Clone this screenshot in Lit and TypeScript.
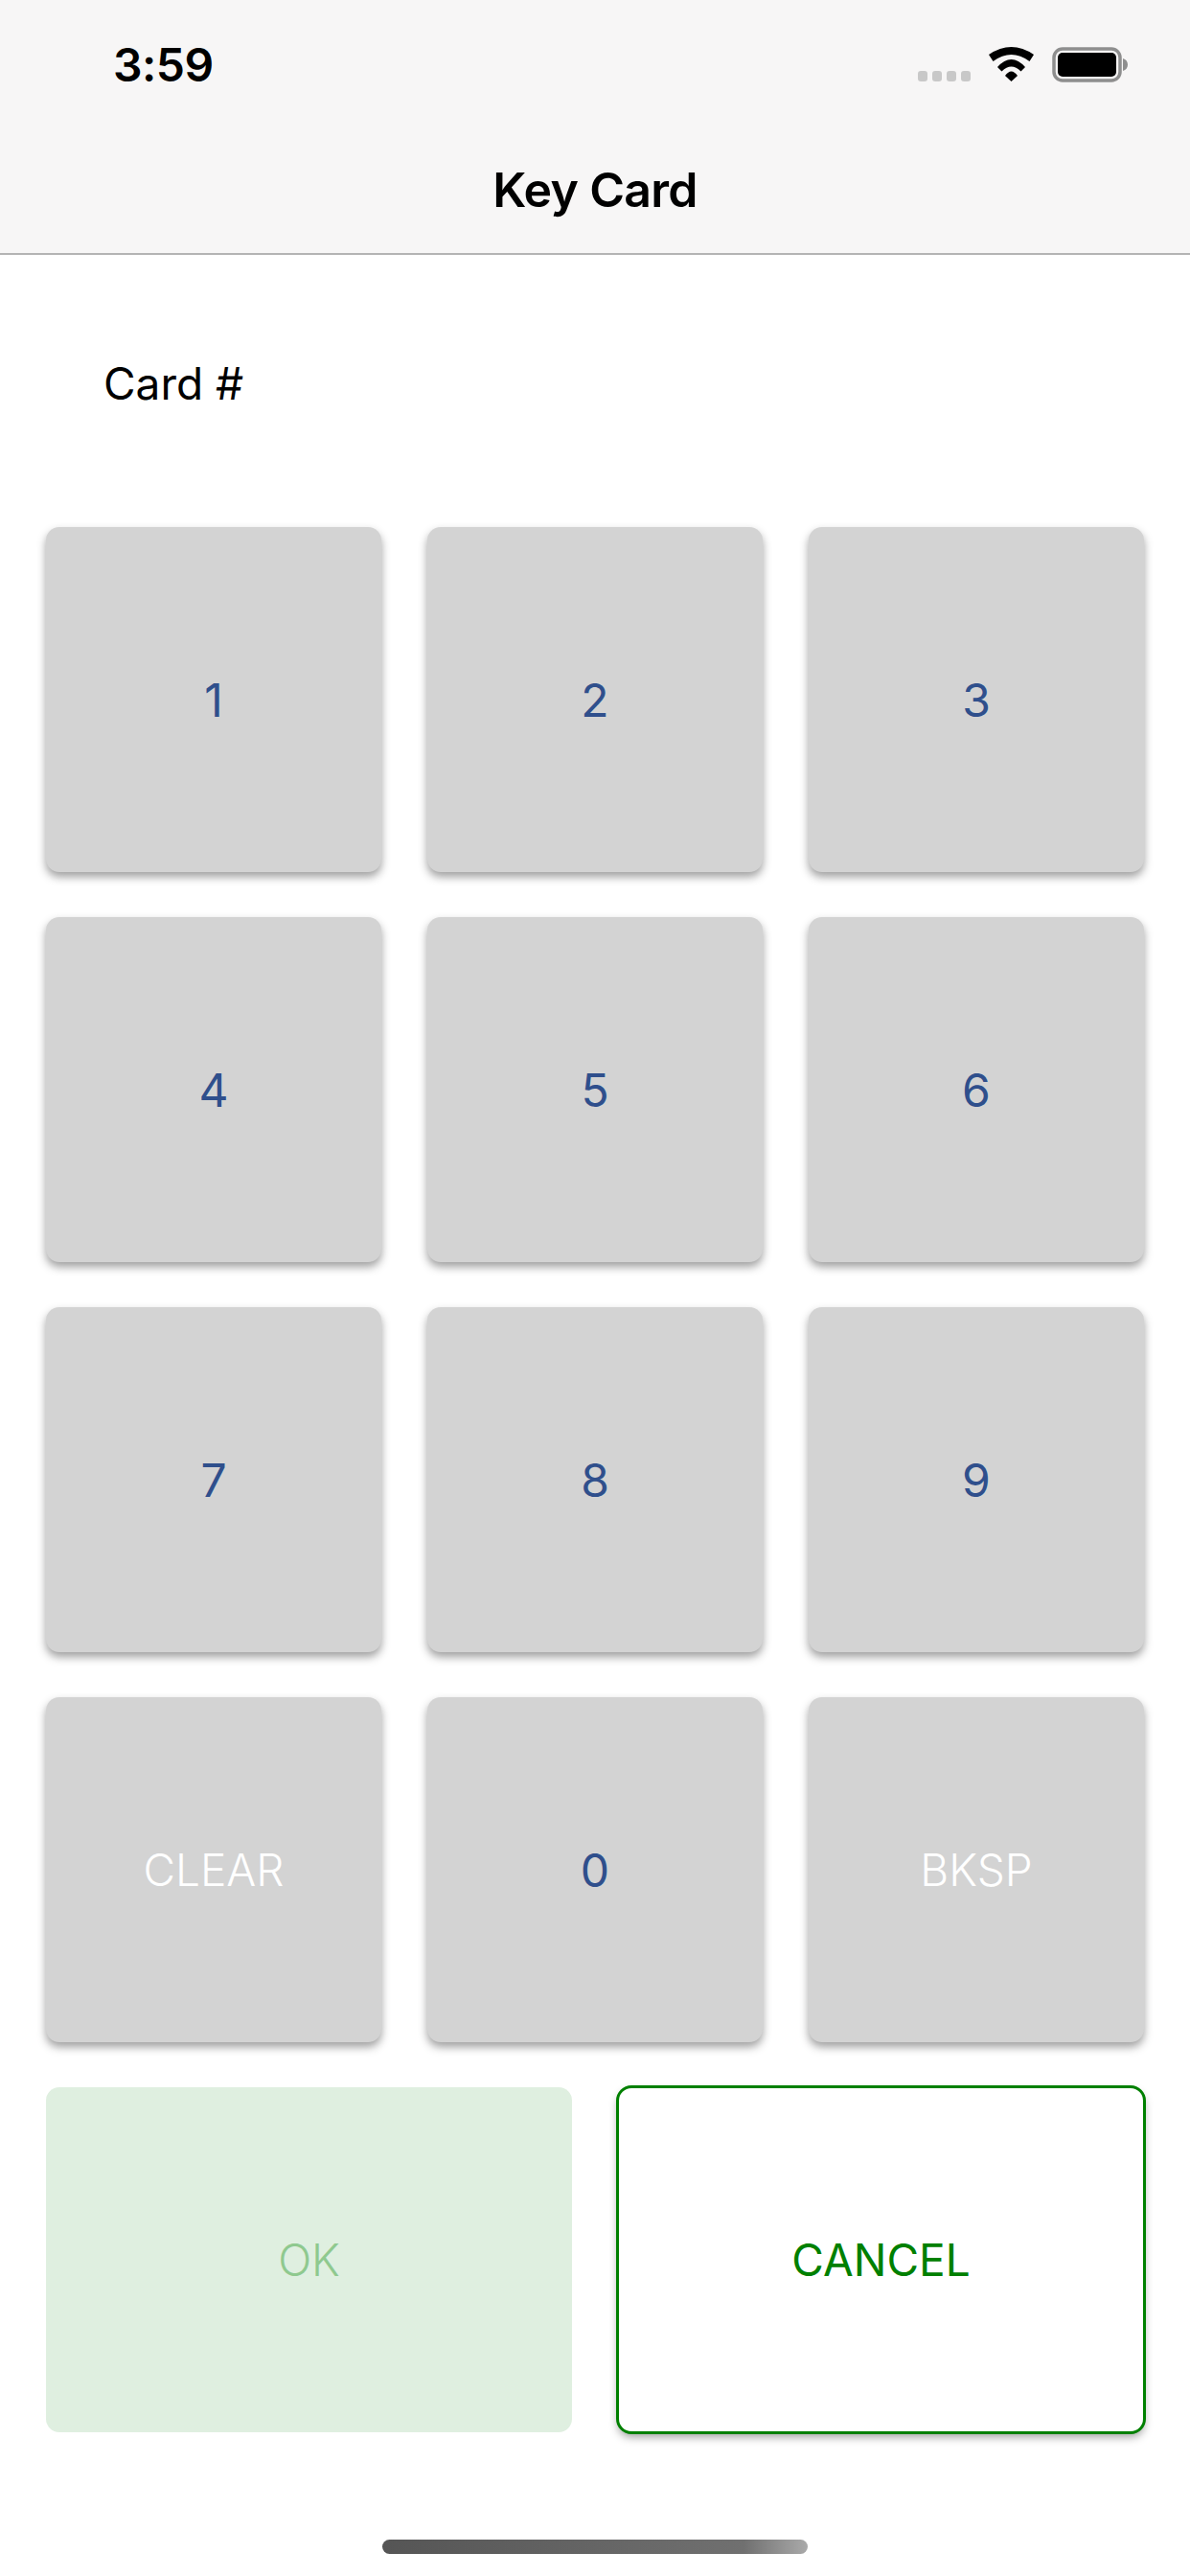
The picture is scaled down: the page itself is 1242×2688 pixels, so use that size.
import { LitElement, html, css } from "lit";
import { customElement } from "lit/decorators.js";

const KEYS = ["1", "2", "3", "4", "5", "6", "7", "8", "9", "CLEAR", "0", "BKSP"];

@customElement("app-root")
export class AppRoot extends LitElement {
  static styles = css`
    :host {
      display: block;
      width: 1242px;
      height: 2688px;
      background: #ffffff;
      font-family: "Inter", "Liberation Sans", sans-serif;
      position: relative;
      overflow: hidden;
    }

    .top {
      height: 264px;
      background: #f7f6f6;
      border-bottom: 2px solid #b4b4b4;
      display: flex;
      flex-direction: column;
    }

    .status {
      height: 134px;
      display: flex;
      align-items: center;
      justify-content: space-between;
      padding: 0 65px 0 118px;
    }

    .time {
      font-size: 48px;
      font-weight: 600;
      color: #000;
      letter-spacing: -0.5px;
    }

    .status-icons {
      display: flex;
      align-items: flex-start;
    }

    .dots {
      margin: 25px 19px 0 0;
    }

    .wifi {
      margin-right: 19px;
    }

    .title {
      margin-top: 34px;
      text-align: center;
      font-size: 50px;
      font-weight: 600;
      letter-spacing: -0.7px;
      color: #000;
      line-height: 60px;
    }

    .card-label {
      padding: 106px 0 0 108px;
      font-size: 46px;
      line-height: 56px;
      color: #000;
      height: 178px;
    }

    .pad {
      display: grid;
      grid-template-columns: repeat(3, 350px);
      grid-auto-rows: 360px;
      gap: 47px 48px;
      padding: 0 48px;
    }

    .actions {
      display: grid;
      grid-template-columns: 549px 549px;
      gap: 48px;
      padding: 47px 48px 0;
    }

    button {
      font: inherit;
      font-size: 46px;
      border: none;
      border-radius: 14px;
      padding: 0;
      height: 360px;
      display: flex;
      align-items: center;
      justify-content: center;
    }

    .key {
      background: #d3d3d3;
      color: #2f4f8c;
      font-size: 48px;
      box-shadow: 0 5px 10px rgba(0, 0, 0, 0.38);
    }

    .key.word {
      color: #ffffff;
      font-size: 46px;
      font-weight: 350;
    }

    .ok {
      background: #dfefe0;
      color: #8fc98f;
      font-weight: 350;
    }

    .cancel {
      background: #ffffff;
      color: #008000;
      outline: 3px solid #008000;
      outline-offset: -1px;
      box-shadow: 0 5px 10px rgba(0, 0, 0, 0.38);
    }

    .home {
      position: absolute;
      left: 399px;
      top: 2650px;
      width: 444px;
      height: 15px;
      border-radius: 8px;
      background: linear-gradient(90deg, #555 0%, #707070 85%, #aaa 100%);
    }
  `;

  render() {
    return html`
      <header class="top">
        <div class="status">
          <span class="time">3:59</span>
          <div class="status-icons">
            <svg class="dots" width="55" height="11" viewBox="0 0 55 11" fill="#c8c8c8">
              <rect x="0" y="0" width="10" height="11" rx="3"></rect>
              <rect x="15" y="0" width="10" height="11" rx="3"></rect>
              <rect x="30" y="0" width="10" height="11" rx="3"></rect>
              <rect x="45" y="0" width="10" height="11" rx="3"></rect>
            </svg>
            <svg class="wifi" width="47" height="36" viewBox="0 0 47 36">
              <path d="M0 8 Q23.5 -8 47 8 L42.5 15 Q23.5 1 4.5 15 Z" fill="#000"></path>
              <path d="M9 21 Q23.5 5 38 21 L33.5 25.5 Q23.5 15.5 13.5 25.5 Z" fill="#000"></path>
              <path d="M17 30 Q23.5 21 30 30 L23.5 36 Z" fill="#000"></path>
            </svg>
            <svg width="79" height="37" viewBox="0 0 79 37">
              <rect x="2" y="2" width="69" height="33" rx="9" fill="none" stroke="#8e8e8e" stroke-width="3.5"></rect>
              <rect x="6" y="6" width="61" height="25" rx="5" fill="#000"></rect>
              <path d="M74 12 C77 13 79 15 79 18.5 C79 22 77 24 74 25 Z" fill="#8e8e8e"></path>
            </svg>
          </div>
        </div>
        <div class="title">Key Card</div>
      </header>
      <div class="card-label">Card #</div>
      <div class="pad">
        ${KEYS.map(
          (k) => html`<button class="key ${k.length > 1 ? "word" : ""}">${k}</button>`
        )}
      </div>
      <div class="actions">
        <button class="ok">OK</button>
        <button class="cancel">CANCEL</button>
      </div>
      <div class="home"></div>
    `;
  }
}
